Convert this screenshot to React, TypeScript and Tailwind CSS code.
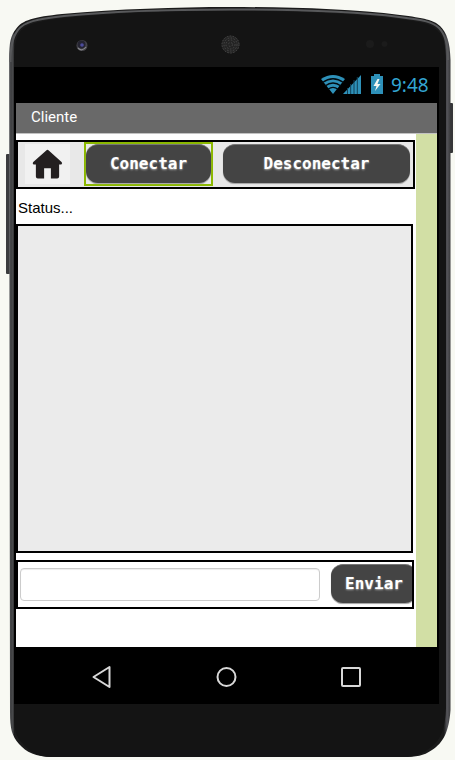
import React from "react";

function PhoneBody() {
  return (
    <svg className="absolute inset-0" width="455" height="760" viewBox="0 0 455 760">
      <defs>
        <linearGradient id="rim" x1="0" x2="1" y1="0" y2="0">
          <stop offset="0" stopColor="#77787b" />
          <stop offset="0.004" stopColor="#3c3d3f" />
          <stop offset="0.009" stopColor="#4a4b4d" />
          <stop offset="0.012" stopColor="#1b1b1b" />
          <stop offset="0.985" stopColor="#1b1b1b" />
          <stop offset="0.992" stopColor="#55555a" />
          <stop offset="1" stopColor="#3a3a3c" />
        </linearGradient>
      </defs>
      <rect x="6" y="154" width="5" height="120" rx="1" fill="#3b3c3e" />
      <rect x="448" y="103" width="5" height="50" rx="1" fill="#353638" />
      <path d="M9 60C9 42 11 35 16 29C22 20 34 17 62 14C120 9 175 7 230 7C290 7 352 9 400 15C424 18 434 20 440 26C447 33 450 42 450.500 60V710C449 732 443 743 432 750C423 756 417 757 403 757H52C36 757 26 752 19 744C12 736 10 729 10 712Z" fill="url(#rim)" />
      <path d="M10.500 62C10.500 44 13 36 18 30C24 22 36 19 64 16C120 10.500 175 9.500 230 9.500C290 9.500 352 11 399 17C424 20 433 22 439 28C445 34 448 43 448 60" fill="none" stroke="#58595b" strokeWidth="2" />
      <path d="M14 62C14 45 16 38 20 32C26 24 38 21 64 18C120 12 175 11 230 11C290 11 352 13 398 19C423 22 431 24 437 30C443 36 446 44 446 62V708C445 729 441 740 430 748C422 754 415 757 402 757H52C37 757 29 751 22 743C15 735 14 728 14 710Z" fill="#141414" />
      <circle cx="82" cy="45.500" r="5.500" fill="#444348" />
      <circle cx="81.500" cy="44.500" r="4" fill="#242331" />
      <circle cx="82" cy="45" r="1.800" fill="#4c4c9c" />
      <path d="M78 48Q82 52 86 47" stroke="#85858a" strokeWidth="1.200" fill="none" />
      <circle cx="230.500" cy="44.500" r="9" fill="#242424" />
      <g fill="none" stroke="#484848" strokeWidth="1" strokeDasharray="1.500 1.500">
        <circle cx="230.500" cy="44.500" r="8.500" />
        <circle cx="230.500" cy="44.500" r="6.500" />
        <circle cx="230.500" cy="44.500" r="4.500" />
        <circle cx="230.500" cy="44.500" r="2" />
      </g>
      <circle cx="370" cy="44" r="4" fill="#1b1b1b" />
      <circle cx="384.500" cy="44" r="3" fill="#1b1b1b" />
    </svg>
  );
}

function StatusIcons() {
  return (
    <svg width="66" height="22" viewBox="320 73 66 22" className="shrink-0">
      <path d="M321 79Q333 71 345 79L333 94Z" fill="#2e91b9" />
      <path d="M322.500 82.500Q333 75 343.500 82.500M325 86Q333 80 341 86M328 89.300Q333 85.500 338 89.300" fill="none" stroke="#020b10" strokeWidth="1.300" />
      <path d="M343 94L361 75V94Z" fill="#2e91b9" />
      <path d="M347.500 88V94M350.700 84V94M354 80V94M357.300 77V94" stroke="#124157" strokeWidth="1" />
      <path d="M371 76H374V74H380V76H383V94H371Z" fill="#2e91b9" />
      <path d="M377.500 79L373.500 86H376.500L375 91L380.500 84H377.500L379.500 79Z" fill="#f5f7f2" />
    </svg>
  );
}

function Button({ children, className }: { children: string; className: string }) {
  return (
    <button className={`h-[39px] shrink-0 rounded-[12px] border-t border-t-[#777] bg-[#444] text-center font-['DejaVu_Sans_Mono',monospace] text-[16px] leading-[36px] font-bold text-white shadow-[0_1px_1px_#a8a8a8,0_1px_0_#b4b4b4] [text-shadow:0_1px_2px_#aaa] ${className}`}>
      {children}
    </button>
  );
}

export default function App() {
  return (
    <div className="relative h-[760px] w-[455px] overflow-hidden bg-[#f8f9f3]">
      <PhoneBody />
      <div className="relative flex h-full flex-col pt-[67px] pl-[14px]">
        <div className="flex h-[637px] w-[425px] flex-col bg-black px-[2px]">
          <div className="flex h-9 shrink-0 items-start pt-[6px] pl-[304px]">
            <StatusIcons />
            <span className="ml-[5px] font-['Noto_Sans',sans-serif] text-[19px] leading-[24px] text-[#33a6d3]">9:48</span>
          </div>
          <div className="h-[31px] shrink-0 border-b border-[#c2c2c2] bg-[#696969] pl-[15px] font-[Roboto,sans-serif] text-[15px] leading-[28px] text-white">Cliente</div>
          <div className="flex h-[513px] shrink-0 bg-[#d2dfa5]">
            <div className="flex w-[400px] flex-col bg-white pt-[6px]">
              <div className="flex h-[49px] w-[399px] shrink-0 border-2 border-black bg-[#e8e8e8]">
                <div className="mt-[2px] ml-[7px] flex h-10 w-[45px] items-start justify-center bg-[#f1f1f1] pt-[5px]">
                  <svg width="31" height="30" viewBox="0 0 32 31" preserveAspectRatio="none" fill="#231f20">
                    <path d="M14.700 1.500Q16 .3 17.300 1.500L30.500 13.500Q31.800 15 30.300 16H28V28.500Q28 30.500 26 30.500H19.500V20H12.500V30.500H6Q4 30.500 4 28.500V16H1.500Q0 15 1.300 13.500Z" />
                  </svg>
                </div>
                <div className="ml-[14px] h-[44px] w-[129px] border-2 border-[#8bb800]">
                  <Button className="w-[125px]">Conectar</Button>
                </div>
                <Button className="mt-[2px] ml-[10px] w-[187px]">Desconectar</Button>
              </div>
              <div className="h-[35px] shrink-0 pt-[2px] pl-[2px] font-['Liberation_Sans',Arial,sans-serif] text-[15px] leading-[34px] text-black">Status...</div>
              <div className="h-[329px] w-[397px] shrink-0 border-2 border-black bg-[#ebebeb]" />
              <div className="mt-[7px] flex h-[49px] w-[398px] shrink-0 overflow-hidden border-2 border-black bg-white">
                <input aria-label="Mensaje" className="mt-[6px] ml-[2px] h-[33px] w-[300px] shrink-0 rounded-[4px] border border-[#ccc] bg-white shadow-[inset_0_1px_1px_#eee] outline-none" />
                <Button className="mt-[2px] ml-[11px] w-[86px]">Enviar</Button>
              </div>
            </div>
          </div>
          <div className="flex h-[57px] shrink-0 items-center pt-[3px] pl-[76px]">
            <svg width="270" height="24" viewBox="0 0 270 24" fill="none" stroke="#d8d8d8" strokeWidth="2">
              <path d="M1.500 12L17.500 2V22Z" strokeLinejoin="round" />
              <circle cx="134.500" cy="12" r="9" />
              <rect x="250" y="3" width="18" height="18" rx="1" />
            </svg>
          </div>
        </div>
      </div>
    </div>
  );
}
